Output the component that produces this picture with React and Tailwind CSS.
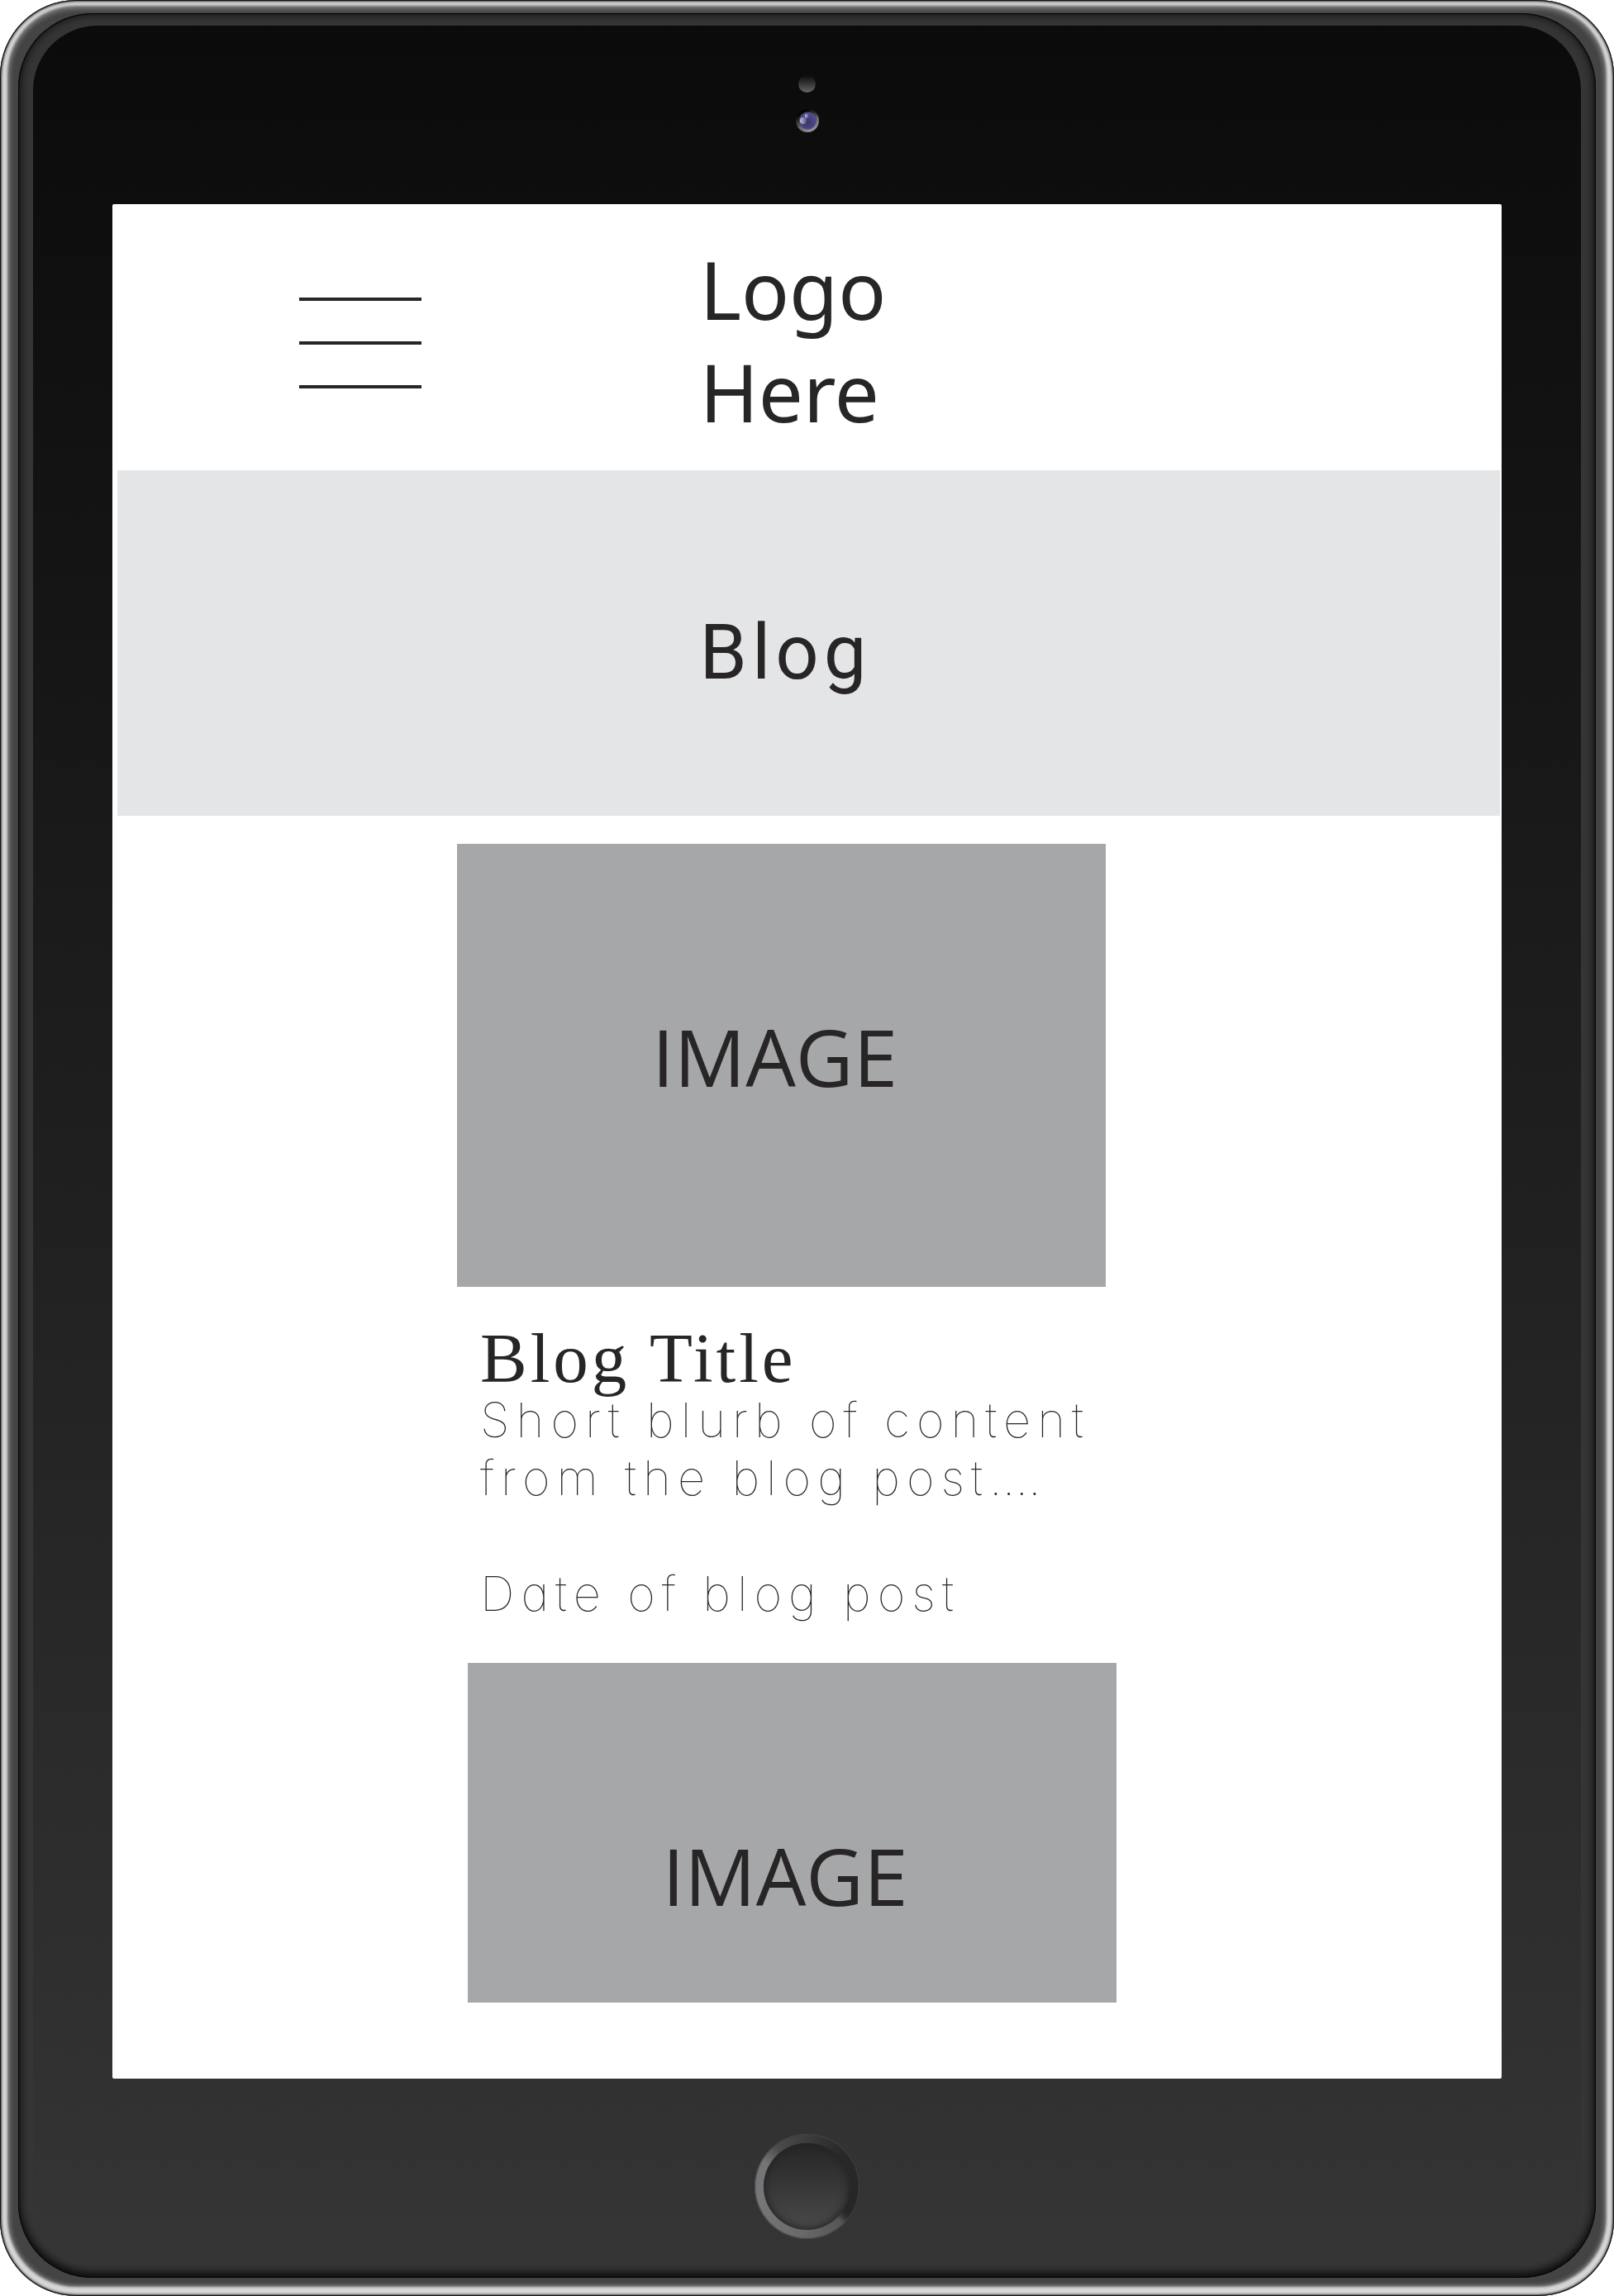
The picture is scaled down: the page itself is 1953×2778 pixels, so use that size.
function MenuButton() {
  return (
    <button type="button" aria-label="Open menu" className="flex w-[148px] flex-col gap-[49px]">
      <span className="h-1 w-full bg-[#272526]" />
      <span className="h-1 w-full bg-[#272526]" />
      <span className="h-1 w-full bg-[#272526]" />
    </button>
  );
}

function ImagePlaceholder({ className }) {
  return (
    <div className={`overflow-hidden bg-[#a6a7a9] pr-4 pt-[195px] text-center ${className}`}>
      <span className="block font-['Open_Sans',sans-serif] text-[96px] leading-[124px]">IMAGE</span>
    </div>
  );
}

function Camera() {
  return (
    <div className="flex flex-col items-center gap-5 pb-[87px] pt-[60px]">
      <span className="size-[21px] rounded-full bg-linear-to-b from-[#0c0c0c] to-[#666666]" />
      <svg viewBox="0 0 28 28" className="size-7" aria-hidden="true">
        <defs>
          <linearGradient id="lensRim" x1="0.2" y1="0.1" x2="0.7" y2="1">
            <stop offset="0.1" stopColor="#050505" />
            <stop offset="0.6" stopColor="#6a6a6a" />
            <stop offset="1" stopColor="#9a9a9a" />
          </linearGradient>
          <radialGradient id="lensGlass" cx="0.45" cy="0.6" r="0.6">
            <stop offset="0" stopColor="#38356a" />
            <stop offset="1" stopColor="#524f8c" />
          </radialGradient>
          <linearGradient id="glint">
            <stop offset="0" stopColor="#c2c0da" />
            <stop offset="1" stopColor="#57548c" />
          </linearGradient>
        </defs>
        <circle cx="14" cy="14" r="14" fill="url(#lensRim)" />
        <circle cx="14.5" cy="14" r="10.5" fill="url(#lensGlass)" />
        <circle cx="9" cy="14" r="4" fill="url(#glint)" />
        <rect x="11" y="6" width="4.5" height="4.5" rx="1" fill="url(#glint)" />
      </svg>
    </div>
  );
}

function HomeButton() {
  return (
    <div className="flex justify-center pb-8 pt-[67px]">
      <button
        type="button"
        aria-label="Home"
        className="size-[127px] rounded-full bg-[conic-gradient(from_0deg,#3c3c3d_0deg,#2a2829_45deg,#272526_120deg,#2c2a2b_127deg,#555556_136deg,#6a6a6c_190deg,#77777a_250deg,#747476_300deg,#4c4c4d_322deg,#3c3c3d_360deg)] p-[11px] shadow-[inset_0_0_1px_1px_#444344]"
      >
        <span className="block size-full rounded-full bg-linear-to-b from-[#272627] to-[#4a4a4b] shadow-[inset_0_0_10px_2px_#242324]" />
      </button>
    </div>
  );
}

function Screen() {
  return (
    <div className="mx-24 rounded-[2px] bg-white text-[#272526]">
      <header className="grid grid-cols-[1fr_auto_1fr] items-center pb-[33px] pr-[34px] pt-[41px]">
        <div className="pl-[226px] pt-1.5">
          <MenuButton />
        </div>
        <a href="#" className="font-['Noto_Sans',sans-serif] text-[96px] leading-[124px]">
          Logo
          <br />
          Here
        </a>
      </header>
      <section className="ml-1.5 mr-0.5 flex h-[418px] items-center justify-center bg-[#e4e5e7] pr-14 pt-6">
        <h1 className="font-['Roboto',sans-serif] text-[92px] leading-[124px] tracking-[6px]">Blog</h1>
      </section>
      <main className="pb-[92px] pt-[34px]">
        <article className="flex justify-center pr-[62px]">
          <div className="w-[785px]">
            <ImagePlaceholder className="h-[536px]" />
            <div className="pl-7 pt-[46px]">
              <h2 className="font-['Liberation_Serif',serif] text-[85px] leading-[80px] tracking-[4px]">Blog Title</h2>
              <div className="whitespace-nowrap font-['Inter',sans-serif] text-[58px] font-thin leading-[70px] tracking-[8px] [font-feature-settings:'cv11']">
                <p>
                  Short blurb of content
                  <br />
                  from the blog post<span className="tracking-normal">....</span>
                </p>
                <p className="mt-[70px]">Date of blog post</p>
              </div>
            </div>
          </div>
        </article>
        <article className="mt-[49px] flex justify-center pr-[37px]">
          <ImagePlaceholder className="h-[411px] w-[785px]" />
        </article>
      </main>
    </div>
  );
}

export default function App() {
  return (
    <div className="bg-white">
      <div className="rounded-[92px] bg-[#444444] px-[22px] pb-[22px] pt-4 shadow-[inset_0_0_1px_1px_#0c0c0c,inset_0_0_3px_2px_#4a4a4a,inset_0_-2px_3px_9px_#d6d6d6,inset_0_-1px_4px_13px_#6a6a6a]">
        <div className="rounded-[90px] bg-[#363536] px-[18px] pb-[15px] pt-[15px] shadow-[inset_0_0_1px_1px_#050505,inset_0_0_10px_2px_#161616,inset_0_-6px_12px_-2px_#000000]">
          <div className="rounded-t-[78px] rounded-b-[70px] bg-linear-to-b from-[#0b0b0b] to-[#363536]">
            <Camera />
            <Screen />
            <HomeButton />
          </div>
        </div>
      </div>
    </div>
  );
}
